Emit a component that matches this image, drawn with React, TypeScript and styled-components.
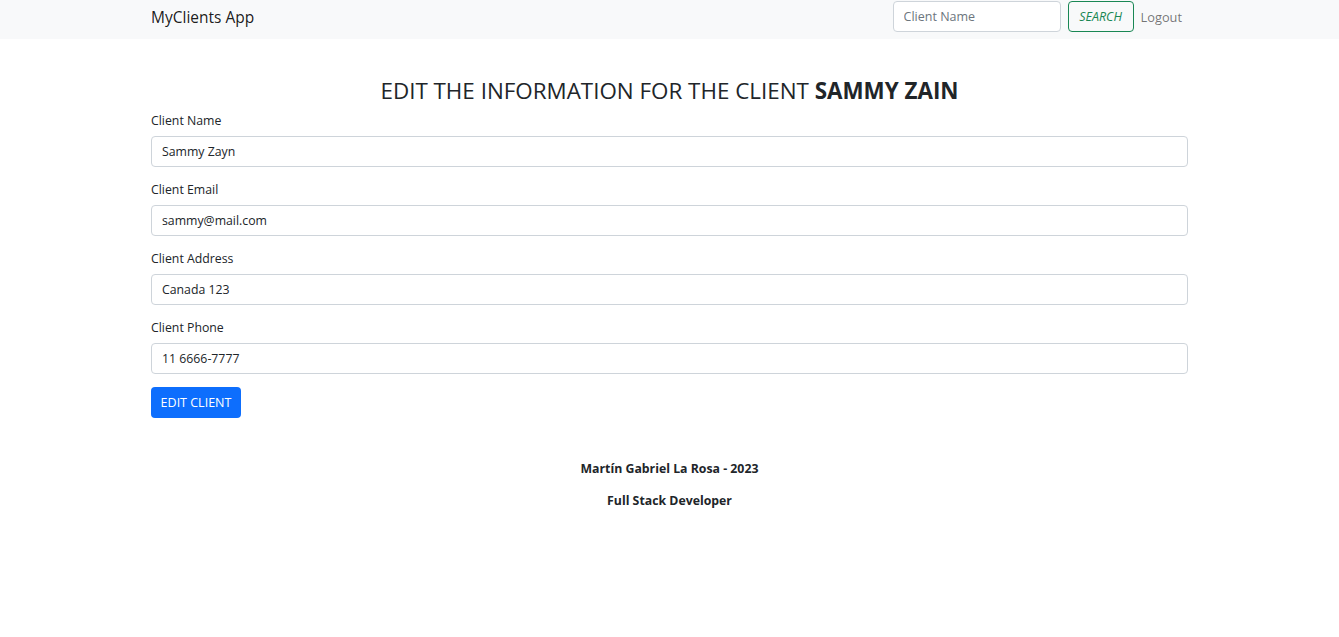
import React from "react";
import styled, { createGlobalStyle } from "styled-components";

const Global = createGlobalStyle`
  html, body { margin: 0; padding: 0; background: #fff; }
  body {
    font-family: "Open Sans", "Noto Sans", sans-serif;
    color: #212529;
    font-size: 13px;
  }
  * { box-sizing: border-box; }
`;

const Nav = styled.nav`
  background: #f8f9fa;
  height: 39px;
  display: flex;
  align-items: center;
`;

const NavInner = styled.div`
  width: 1037px;
  margin: 0 auto;
  display: flex;
  align-items: center;
  justify-content: space-between;
`;

const Brand = styled.span`
  font-size: 15.5px;
  color: rgba(0, 0, 0, 0.9);
  margin-top: -5px;
`;

const NavRight = styled.div`
  display: flex;
  align-items: center;
  margin-top: -6px;
  margin-right: 6px;
`;

const SearchInput = styled.input`
  width: 168px;
  height: 31px;
  border: 1px solid #ced4da;
  border-radius: 4px;
  padding: 0 10px;
  font-family: inherit;
  font-size: 12.5px;
  color: #212529;
  background: #fff;
  &::placeholder { color: #6c757d; }
`;

const SearchButton = styled.button`
  margin-left: 7px;
  height: 31px;
  width: 66px;
  border: 1px solid #198754;
  border-radius: 4px;
  background: transparent;
  color: #198754;
  font-family: inherit;
  font-style: italic;
  font-size: 12.5px;
  padding: 0;
`;

const NavLink = styled.span`
  margin-left: 7px;
  color: rgba(0, 0, 0, 0.55);
  font-size: 12.8px;
`;

const Main = styled.main`
  width: 1037px;
  margin: 0 auto;
  padding-top: 35px;
`;

const Title = styled.h4`
  margin: 0 0 4px;
  text-align: center;
  font-size: 22.4px;
  font-weight: 400;
  line-height: 34px;
  b { font-weight: 700; }
`;

const Group = styled.div`
  display: flex;
  flex-direction: column;
  margin-bottom: 14px;
`;

const Label = styled.label`
  font-size: 12.3px;
  line-height: 18px;
  margin-bottom: 6px;
`;

const Input = styled.input`
  width: 100%;
  height: 31px;
  border: 1px solid #ced4da;
  border-radius: 4px;
  padding: 0 10px;
  font-family: inherit;
  font-size: 12.3px;
  color: #212529;
  background: #fff;
`;

const Submit = styled.button`
  margin-top: -1px;
  height: 31px;
  width: 90px;
  padding: 0;
  border: none;
  border-radius: 4px;
  background: #0d6efd;
  color: #fff;
  font-family: inherit;
  font-size: 12.5px;
`;

const Footer = styled.footer`
  margin-top: 42px;
  text-align: center;
  font-weight: 700;
  font-size: 12.3px;
  p { margin: 0 0 14px; line-height: 18px; }
`;

const fields = [
  { label: "Client Name", value: "Sammy Zayn" },
  { label: "Client Email", value: "sammy@mail.com" },
  { label: "Client Address", value: "Canada 123" },
  { label: "Client Phone", value: "11 6666-7777" },
];

export default function App() {
  return (
    <>
      <Global />
      <Nav>
        <NavInner>
          <Brand>MyClients App</Brand>
          <NavRight>
            <SearchInput placeholder="Client Name" />
            <SearchButton>SEARCH</SearchButton>
            <NavLink>Logout</NavLink>
          </NavRight>
        </NavInner>
      </Nav>
      <Main>
        <Title>
          EDIT THE INFORMATION FOR THE CLIENT <b>SAMMY ZAIN</b>
        </Title>
        <form onSubmit={(e) => e.preventDefault()}>
          {fields.map((f) => (
            <Group key={f.label}>
              <Label>{f.label}</Label>
              <Input defaultValue={f.value} />
            </Group>
          ))}
          <Submit type="submit">EDIT CLIENT</Submit>
        </form>
        <Footer>
          <p>Martín Gabriel La Rosa - 2023</p>
          <p>Full Stack Developer</p>
        </Footer>
      </Main>
    </>
  );
}
